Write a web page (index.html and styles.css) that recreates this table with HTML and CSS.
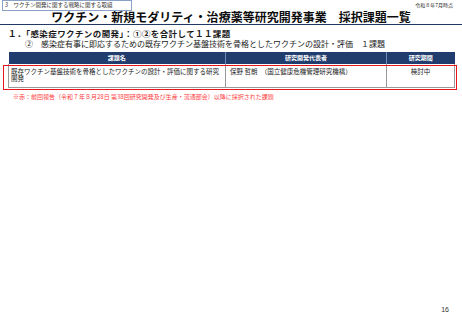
FILE: index.html
```html
<!DOCTYPE html>
<html lang="ja">
<head>
<meta charset="utf-8">
<link rel="stylesheet" href="styles.css">
</head>
<body>
<div class="page">
  <div class="top">
    <div class="tag">3　ワクチン開発に関する戦略に関する取組</div>
    <div class="date">令和８年7月時点</div>
  </div>
  <h1 class="title">ワクチン・新規モダリティ・治療薬等研究開発事業　採択課題一覧</h1>
  <div class="rule"></div>
  <p class="h1">１．「感染症ワクチンの開発」：①②を合計して１１課題</p>
  <p class="h2">②　感染症有事に即応するための既存ワクチン基盤技術を骨格としたワクチンの設計・評価　１課題</p>
  <div class="table-wrap">
    <table class="tbl">
      <colgroup>
        <col class="c1"><col class="c2"><col class="c3">
      </colgroup>
      <thead>
        <tr><th>課題名</th><th>研究開発代表者</th><th>研究期間</th></tr>
      </thead>
      <tbody>
        <tr>
          <td class="name">既存ワクチン基盤技術を骨格としたワクチンの設計・評価に関する研究開発</td>
          <td class="rep">保野 哲朗　（国立健康危機管理研究機構）</td>
          <td class="period">検討中</td>
        </tr>
      </tbody>
    </table>
    <div class="highlight"></div>
  </div>
  <p class="note">※赤：前回報告（令和７年８月28日 第38回研究開発及び生産・流通部会）以降に採択された課題</p>
  <div class="pageno">16</div>
</div>
</body>
</html>
```

FILE: styles.css
```css
html, body {
  margin: 0;
  padding: 0;
  background: #ffffff;
}
body {
  font-family: "Noto Sans CJK JP", "Noto Sans", sans-serif;
  color: #1a1a1a;
}
.page {
  width: 462px;
  height: 320px;
  display: flex;
  flex-direction: column;
  box-sizing: border-box;
}
.top {
  display: flex;
  justify-content: space-between;
  align-items: flex-start;
  height: 11px;
  padding: 0 9px 0 2px;
}
.tag {
  width: 126px;
  height: 9px;
  border: 1px solid #8aa2c8;
  font-size: 5.5px;
  line-height: 9px;
  padding-left: 2px;
  box-sizing: content-box;
  white-space: nowrap;
  color: #333;
}
.date {
  font-size: 5px;
  line-height: 8px;
  margin-top: 1px;
  color: #222;
  white-space: nowrap;
}
.title {
  margin: -1px 0 0;
  text-align: center;
  font-size: 12px;
  line-height: 13px;
  font-weight: 700;
  color: #0d0d0d;
  white-space: nowrap;
}
.rule {
  margin-top: 1px;
  height: 0;
  border-top: 1.5px solid #1f3864;
}
.h1 {
  margin: 3px 0 0;
  padding-left: 8px;
  font-size: 8.5px;
  line-height: 10px;
  font-weight: 700;
  letter-spacing: 0.4px;
  white-space: nowrap;
}
.h2 {
  margin: 1px 0 0;
  padding-left: 25px;
  font-size: 8px;
  line-height: 10px;
  white-space: nowrap;
  color: #222;
}
.table-wrap {
  position: relative;
  margin: 3px 8px 0 8px;
  width: 446px;
}
.tbl {
  width: 446px;
  border-collapse: collapse;
  table-layout: fixed;
}
.c1 { width: 217px; }
.c2 { width: 161px; }
.c3 { width: 68px; }
.tbl th {
  height: 12px;
  padding: 0;
  background: #203d6e;
  color: #ffffff;
  font-size: 6px;
  font-weight: 700;
  line-height: 12px;
  text-align: center;
  border-left: 1px solid #6f8bb8;
}
.tbl th:first-child { border-left: none; }
.tbl td {
  height: 23px;
  padding: 4px 2px 0;
  box-sizing: border-box;
  vertical-align: top;
  font-size: 6.5px;
  line-height: 7px;
  border: 1px solid #9a9a9a;
  border-top: none;
  color: #222;
}
.tbl td.rep { padding-left: 4px; white-space: nowrap; }
.tbl td.period { text-align: center; }
.highlight {
  position: absolute;
  left: -5px;
  right: -3px;
  top: 13px;
  bottom: -2px;
  border: 1.5px solid #e8141c;
  pointer-events: none;
}
.note {
  margin: 5px 0 0;
  padding-left: 13px;
  font-size: 6px;
  line-height: 8px;
  color: #ff3b3b;
  white-space: nowrap;
}
.pageno {
  margin-top: auto;
  align-self: flex-end;
  padding: 0 13px 6px 0;
  font-family: "Liberation Sans", Arial, sans-serif;
  font-size: 7px;
  line-height: 8px;
  color: #333;
}
```
